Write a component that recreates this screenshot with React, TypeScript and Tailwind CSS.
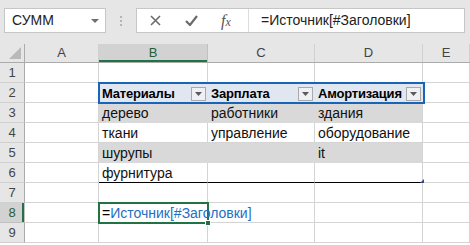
import React from 'react';

const cols = [
  { key: 'A', w: 'w-[74px]' },
  { key: 'B', w: 'w-[109px]' },
  { key: 'C', w: 'w-[107px]' },
  { key: 'D', w: 'w-[108px]' },
  { key: 'E', w: 'flex-1' },
];

type Row = { n: number; band?: boolean; header?: boolean; cells: string[] };

const rows: Row[] = [
  { n: 1, cells: ['', '', '', ''] },
  { n: 2, header: true, cells: ['Материалы', 'Зарплата', 'Амортизация'] },
  { n: 3, band: true, cells: ['дерево', 'работники', 'здания'] },
  { n: 4, cells: ['ткани', 'управление', 'оборудование'] },
  { n: 5, band: true, cells: ['шурупы', '', 'it'] },
  { n: 6, cells: ['фурнитура', '', ''] },
  { n: 7, cells: [] },
  { n: 8, cells: [] },
  { n: 9, cells: [] },
];

const FilterButton = () => (
  <div className="ml-auto mr-[2px] shrink-0 w-[15px] h-[14px] border border-[#a9a9a9] bg-[#eef0f3] flex items-center justify-center">
    <svg width="7" height="4" viewBox="0 0 7 4">
      <path d="M0 0 L7 0 L3.5 4 Z" fill="#5a5a5a" />
    </svg>
  </div>
);

const FormulaBar = () => (
  <div className="h-[44px] bg-[#e6e6e6] flex items-start pt-[8px] pl-[4px]">
    <div className="w-[102px] h-[25px] border border-[#c6c6c6] bg-white flex items-center pl-[7px] pr-[6px]">
      <span className="text-[14px] text-[#222]">СУММ</span>
      <svg className="ml-auto" width="8" height="4" viewBox="0 0 8 4">
        <path d="M0 0 L8 0 L4 4 Z" fill="#6f6f6f" />
      </svg>
    </div>
    <div className="w-[30px] h-[25px] flex flex-col items-center justify-center gap-[2px]">
      <span className="w-[2px] h-[2px] bg-[#b5b5b5]" />
      <span className="w-[2px] h-[2px] bg-[#b5b5b5]" />
      <span className="w-[2px] h-[2px] bg-[#b5b5b5]" />
    </div>
    <div className="w-[329px] h-[25px] border border-[#c6c6c6] bg-white flex">
      <div className="w-[112px] border-r border-[#dcdcdc] flex items-center pl-[13px]">
        <svg width="11" height="11" viewBox="0 0 11 11">
          <path d="M1 1 L10 10 M10 1 L1 10" stroke="#6b6b6b" strokeWidth="1.6" />
        </svg>
        <svg className="ml-[24px]" width="13" height="11" viewBox="0 0 13 11">
          <path d="M1 6 L5 10 L12 1" stroke="#6b6b6b" strokeWidth="2.2" fill="none" />
        </svg>
        <span className="ml-[23px] font-['Liberation_Serif'] italic text-[16px] text-[#555] leading-none">
          f<span className="text-[12px]">x</span>
        </span>
      </div>
      <div className="flex items-center pl-[12px] text-[14px] text-[#222] whitespace-nowrap">
        =Источник[#Заголовки]
      </div>
    </div>
  </div>
);

const ColumnHeaders = () => (
  <div className="flex h-[19px] bg-[#e6e6e6] border-b border-[#ababab]">
    <div className="w-[25px] border-r border-[#ababab] relative">
      <svg className="absolute right-[3px] bottom-[3px]" width="12" height="12" viewBox="0 0 12 12">
        <path d="M12 0 L12 12 L0 12 Z" fill="#b9b9b9" />
      </svg>
    </div>
    {cols.map((c) => (
      <div
        key={c.key}
        className={`${c.w} shrink-0 flex items-center justify-center text-[13px] border-r ${
          c.key === 'B'
            ? 'bg-[#d2d2d2] text-[#1e5e3a] border-[#c0c0c0] shadow-[inset_0_-2px_0_#217346]'
            : 'text-[#444] border-[#d0d0d0]'
        }`}
      >
        {c.key}
      </div>
    ))}
  </div>
);

const SheetRow: React.FC<{ row: Row }> = ({ row }) => {
  const active = row.n === 8;
  return (
    <div className="flex h-[20px]">
      <div
        className={`w-[25px] shrink-0 flex items-center justify-center text-[13px] border-b border-r ${
          active
            ? 'bg-[#d2d2d2] text-[#1e5e3a] border-[#c0c0c0] shadow-[inset_-2px_0_0_#217346]'
            : 'bg-[#e6e6e6] text-[#444] border-[#ababab] border-b-[#d0d0d0]'
        }`}
      >
        {row.n}
      </div>
      {cols.map((c, i) => {
        const inTable = i >= 1 && i <= 3 && row.n >= 2 && row.n <= 6;
        const text = inTable ? row.cells[i - 1] : '';
        let cls = 'border-r border-b border-[#d4d4d4]';
        if (inTable && row.band) cls = 'bg-[#d9d9d9] border-b border-[#d9d9d9]';
        if (inTable && row.header) cls = 'bg-[#e0e7f1] border-b border-[#d4d4d4]';
        if (inTable && row.n === 6) cls = 'border-r border-[#d4d4d4] border-b border-b-black';
        if (inTable && row.band && i === 3) cls = 'bg-[#d9d9d9] border-b border-[#d9d9d9] border-r border-r-[#d4d4d4]';
        return (
          <div
            key={c.key}
            className={`${c.w} shrink-0 flex items-center pl-[3px] pt-[2px] ${cls} ${
              row.header ? 'font-bold text-black text-[13px] tracking-[-0.2px]' : 'text-[#111] text-[14px]'
            }`}
          >
            {text && <span className="whitespace-nowrap">{text}</span>}
            {inTable && row.header && <FilterButton />}
            {active && i === 1 && (
              <span className="whitespace-nowrap relative z-10">
                <span className="text-black">=</span>
                <span className="text-[#1f6fc2]">Источник[#Заголовки]</span>
              </span>
            )}
          </div>
        );
      })}
    </div>
  );
};

export default function App() {
  return (
    <div className="w-[470px] h-[245px] overflow-hidden bg-white font-['Liberation_Sans',sans-serif]">
      <FormulaBar />
      <div className="relative">
        <ColumnHeaders />
        {rows.map((r) => (
          <SheetRow key={r.n} row={r} />
        ))}
        {/* reference outline around the header row */}
        <div className="absolute left-[98px] top-[38px] w-[327px] h-[22px] border-2 border-[#1a64b8] pointer-events-none" />
        {/* table resize corner */}
        <div className="absolute left-[420px] top-[135px] w-0 h-0 border-l-[4px] border-l-transparent border-b-[4px] border-b-[#2a4f8a]" />
        {/* active cell B8 */}
        <div className="absolute left-[98px] top-[158px] w-[111px] h-[22px] border-2 border-[#217346] pointer-events-none" />
        <div className="absolute left-[205px] top-[176px] w-[6px] h-[6px] bg-[#217346] border border-white" />
      </div>
    </div>
  );
}
